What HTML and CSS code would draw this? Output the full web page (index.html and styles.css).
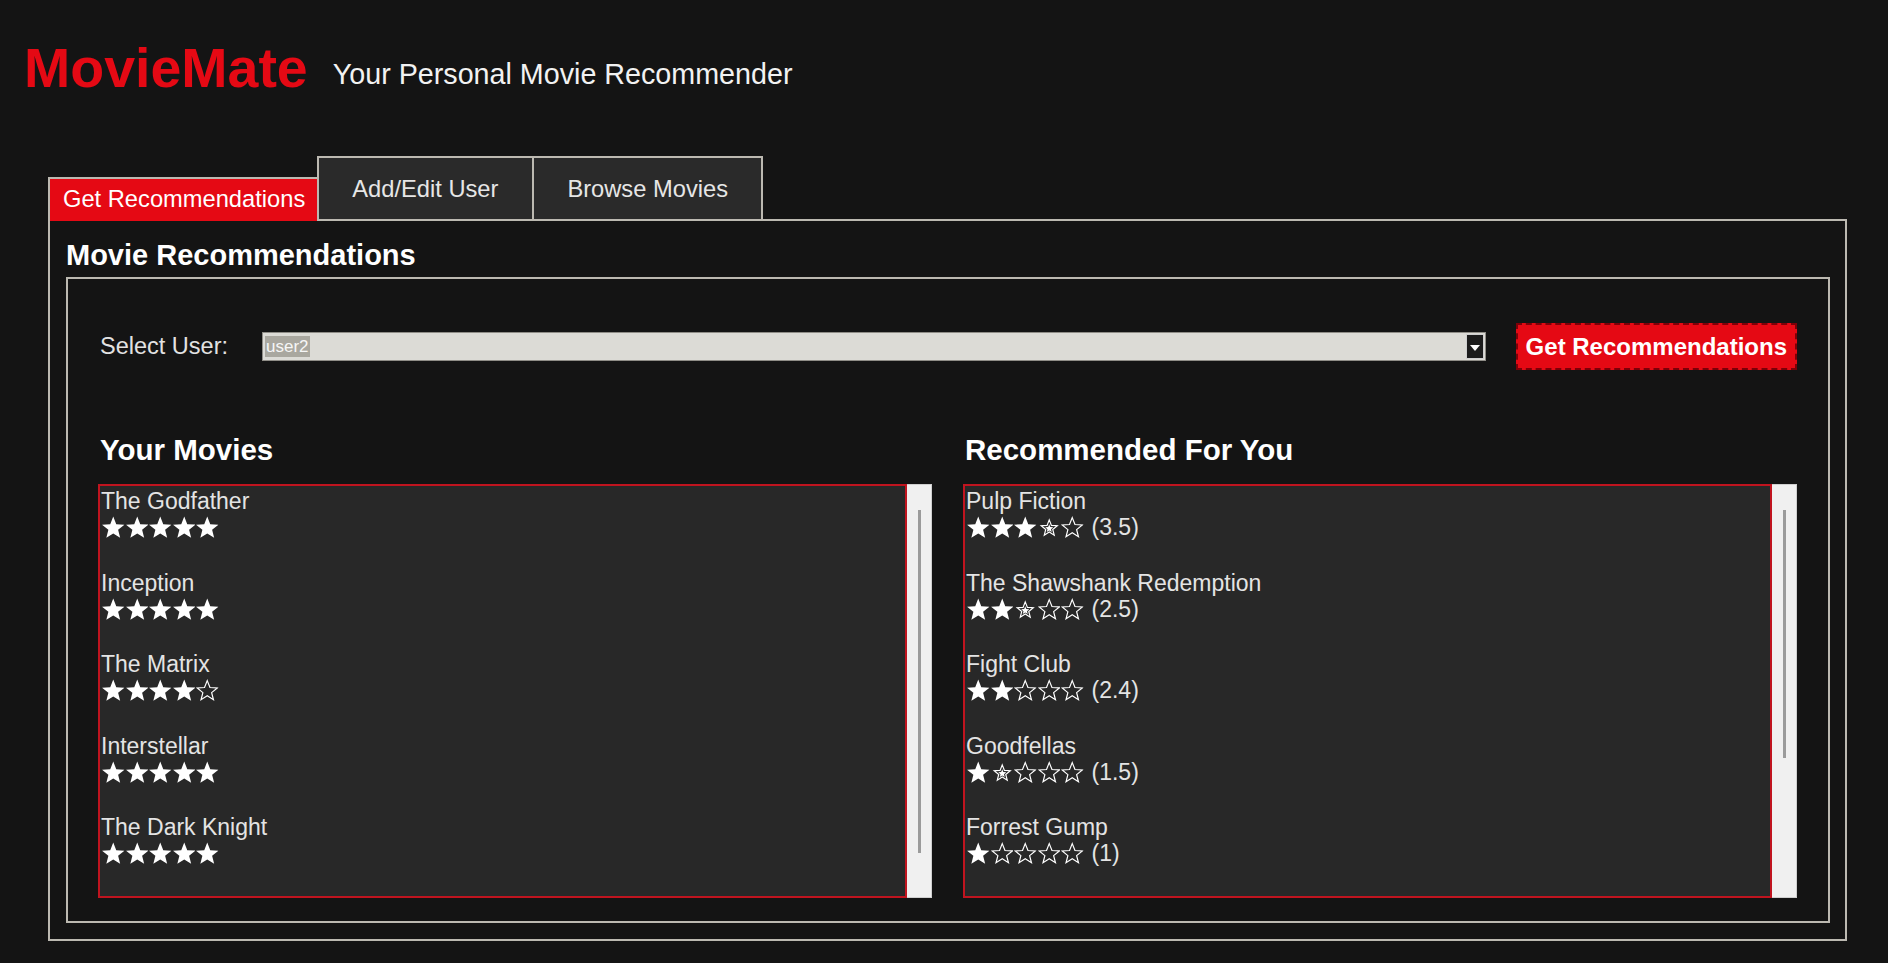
FILE: index.html
```html
<!DOCTYPE html>
<html>
<head>
<meta charset="utf-8">
<title>MovieMate</title>
<link rel="stylesheet" href="styles.css">
</head>
<body>
<svg class="defs" width="0" height="0" aria-hidden="true">
  <defs>
    <path id="star-shape" d="M11 0.5 L13.94 7.96 L21.94 8.45 L15.76 13.55 L17.76 21.3 L11 17 L4.24 21.3 L6.24 13.55 L0.06 8.45 L8.06 7.96 Z"/>
    <symbol id="sf" viewBox="0 0 22 22"><use href="#star-shape" fill="#fff"/></symbol>
    <symbol id="se" viewBox="0 0 22 22"><g transform="translate(11 11.2) scale(0.9) translate(-11 -11.2)"><use href="#star-shape" fill="none" stroke="#fff" stroke-width="1.3" stroke-linejoin="miter"/></g></symbol>
    <symbol id="sh" viewBox="0 0 22 22"><g transform="translate(11 11.5) scale(0.72) translate(-11 -11.2)"><use href="#star-shape" fill="none" stroke="#fff" stroke-width="1.6"/></g><g transform="translate(11 12) scale(0.36) translate(-11 -11.2)"><use href="#star-shape" fill="#fff"/></g></symbol>
  </defs>
</svg>
<header class="header">
  <h1 class="brand">MovieMate</h1>
  <span class="tagline">Your Personal Movie Recommender</span>
</header>
<div class="notebook">
  <div class="tabs">
    <div class="tab active">Get Recommendations</div>
    <div class="tab">Add/Edit User</div>
    <div class="tab">Browse Movies</div>
  </div>
  <section class="panel">
    <h2 class="panel-title">Movie Recommendations</h2>
    <div class="inner">
      <div class="select-row">
        <span class="label">Select User:</span>
        <div class="select"><span class="sel-text">user2</span><span class="arrow"></span></div>
        <button class="btn">Get Recommendations</button>
      </div>
      <div class="cols">
        <div class="col">
          <h3 class="col-title">Your Movies</h3>
          <div class="listwrap">
            <div class="list">
              <div class="item"><div class="title">The Godfather</div><div class="rating" title="5 stars"><svg class="star"><use href="#sf"/></svg><svg class="star"><use href="#sf"/></svg><svg class="star"><use href="#sf"/></svg><svg class="star"><use href="#sf"/></svg><svg class="star"><use href="#sf"/></svg></div></div>
              <div class="item"><div class="title">Inception</div><div class="rating" title="5 stars"><svg class="star"><use href="#sf"/></svg><svg class="star"><use href="#sf"/></svg><svg class="star"><use href="#sf"/></svg><svg class="star"><use href="#sf"/></svg><svg class="star"><use href="#sf"/></svg></div></div>
              <div class="item"><div class="title">The Matrix</div><div class="rating" title="4 stars"><svg class="star"><use href="#sf"/></svg><svg class="star"><use href="#sf"/></svg><svg class="star"><use href="#sf"/></svg><svg class="star"><use href="#sf"/></svg><svg class="star"><use href="#se"/></svg></div></div>
              <div class="item"><div class="title">Interstellar</div><div class="rating" title="5 stars"><svg class="star"><use href="#sf"/></svg><svg class="star"><use href="#sf"/></svg><svg class="star"><use href="#sf"/></svg><svg class="star"><use href="#sf"/></svg><svg class="star"><use href="#sf"/></svg></div></div>
              <div class="item"><div class="title">The Dark Knight</div><div class="rating" title="5 stars"><svg class="star"><use href="#sf"/></svg><svg class="star"><use href="#sf"/></svg><svg class="star"><use href="#sf"/></svg><svg class="star"><use href="#sf"/></svg><svg class="star"><use href="#sf"/></svg></div></div>
            </div>
            <div class="scrollbar"><div class="thumb" style="height:343px"></div></div>
          </div>
        </div>
        <div class="col">
          <h3 class="col-title">Recommended For You</h3>
          <div class="listwrap">
            <div class="list">
              <div class="item"><div class="title">Pulp Fiction</div><div class="rating"><svg class="star"><use href="#sf"/></svg><svg class="star"><use href="#sf"/></svg><svg class="star"><use href="#sf"/></svg><svg class="star"><use href="#sh"/></svg><svg class="star"><use href="#se"/></svg><span class="score">(3.5)</span></div></div>
              <div class="item"><div class="title">The Shawshank Redemption</div><div class="rating"><svg class="star"><use href="#sf"/></svg><svg class="star"><use href="#sf"/></svg><svg class="star"><use href="#sh"/></svg><svg class="star"><use href="#se"/></svg><svg class="star"><use href="#se"/></svg><span class="score">(2.5)</span></div></div>
              <div class="item"><div class="title">Fight Club</div><div class="rating"><svg class="star"><use href="#sf"/></svg><svg class="star"><use href="#sf"/></svg><svg class="star"><use href="#se"/></svg><svg class="star"><use href="#se"/></svg><svg class="star"><use href="#se"/></svg><span class="score">(2.4)</span></div></div>
              <div class="item"><div class="title">Goodfellas</div><div class="rating"><svg class="star"><use href="#sf"/></svg><svg class="star"><use href="#sh"/></svg><svg class="star"><use href="#se"/></svg><svg class="star"><use href="#se"/></svg><svg class="star"><use href="#se"/></svg><span class="score">(1.5)</span></div></div>
              <div class="item"><div class="title">Forrest Gump</div><div class="rating"><svg class="star"><use href="#sf"/></svg><svg class="star"><use href="#se"/></svg><svg class="star"><use href="#se"/></svg><svg class="star"><use href="#se"/></svg><svg class="star"><use href="#se"/></svg><span class="score">(1)</span></div></div>
            </div>
            <div class="scrollbar"><div class="thumb" style="height:248px"></div></div>
          </div>
        </div>
      </div>
    </div>
  </section>
</div>
</body>
</html>
```
FILE: styles.css
```css
* { box-sizing: border-box; }
html, body { margin: 0; padding: 0; }
body {
  background: #141414;
  color: #e4e4e4;
  font-family: "Liberation Sans", Arial, sans-serif;
  width: 1888px;
  height: 963px;
  overflow: hidden;
}
.defs {
  position: absolute;
  width: 0;
  height: 0;
  overflow: hidden;
}
.header {
  display: flex;
  align-items: flex-start;
  padding: 40px 0 0 24px;
}
.brand {
  margin: 0;
  font-size: 55.5px;
  line-height: 56px;
  font-weight: bold;
  color: #e50914;
}
.tagline {
  margin: 17px 0 0 25px;
  font-size: 28.7px;
  line-height: 34px;
  color: #f2f2f2;
}
.notebook {
  margin: 60px 41px 0 48px;
}
.tabs {
  display: flex;
  align-items: flex-end;
}
.tab {
  font-size: 23.7px;
  line-height: 27px;
  color: #e6e6e6;
  background: #2a2a2a;
  border: 2px solid #bcb9b1;
  border-bottom: none;
  padding: 18px 34px 16px 33px;
  white-space: nowrap;
}
.tab + .tab + .tab { border-left: none; padding: 18px 33px 16px 33px; }
.tab.active {
  position: relative;
  z-index: 1;
  margin-bottom: -2px;
  background: #e50914;
  color: #fff;
  border-right: none;
  padding: 7px 12px 8px 13px;
}
.panel {
  border: 2px solid #bcb9b1;
  padding: 0 15px 16px 16px;
}
.panel-title {
  margin: 18px 0 6px 0;
  font-size: 29px;
  line-height: 32px;
  font-weight: bold;
  color: #fff;
}
.inner {
  border: 2px solid #bcb9b1;
  padding: 44px 31px 23px 30px;
}
.select-row {
  display: flex;
  align-items: center;
  height: 47px;
  padding: 0 0 0 2px;
}
.label {
  width: 162px;
  flex: none;
  font-size: 23.5px;
  color: #e2e2e2;
}
.select {
  flex: 1;
  height: 29px;
  background: #dcdbd6;
  border: 1px solid #8f8d87;
  display: flex;
  align-items: center;
  padding: 0 1px 0 2px;
}
.sel-text {
  background: #a9a79f;
  color: #f6f6f6;
  font-size: 17px;
  line-height: 21px;
  padding: 0 1px;
}
.arrow {
  margin-left: auto;
  width: 18px;
  height: 25px;
  background: #1c1c1c;
  border: 1px solid #cfcfcf;
  display: flex;
  align-items: center;
  justify-content: center;
}
.arrow::after {
  content: "";
  border-left: 5px solid transparent;
  border-right: 5px solid transparent;
  border-top: 6px solid #fff;
  margin-top: 3px;
}
.btn {
  margin-left: 30px;
  height: 47px;
  padding: 0 8px;
  background: #e50914;
  color: #fff;
  font-family: "Liberation Sans", Arial, sans-serif;
  font-size: 24px;
  font-weight: bold;
  border: 2px dashed #7d0008;
  white-space: nowrap;
}
.cols {
  display: grid;
  grid-template-columns: 1fr 1fr;
  column-gap: 31px;
  margin-top: 64px;
}
.col-title {
  margin: 0 0 18px 2px;
  font-size: 29.5px;
  line-height: 32px;
  font-weight: bold;
  color: #fff;
}
.listwrap {
  display: flex;
  height: 414px;
}
.list {
  flex: 1;
  background: #282828;
  border: 2px solid #c0141f;
  padding: 2px 1px 2px 1px;
  overflow: hidden;
}
.scrollbar {
  width: 25px;
  flex: none;
  background: #f0f0f0;
  border: 1px solid #cfcfcf;
  border-left: none;
  display: flex;
  justify-content: center;
  align-items: flex-start;
  padding-top: 25px;
}
.thumb {
  width: 3px;
  background: #9b9b9b;
}
.item {
  padding-bottom: 27.5px;
}
.title {
  font-size: 23px;
  line-height: 27px;
  height: 27px;
  color: #e4e4e4;
  white-space: nowrap;
}
.rating {
  display: flex;
  align-items: flex-start;
  height: 27px;
  padding-left: 1px;
  white-space: nowrap;
}
.star {
  width: 22.5px;
  height: 22.5px;
  margin: 1px 1px 0 0;
  flex: none;
}
.score {
  margin-left: 7px;
  font-size: 23px;
  line-height: 25px;
  color: #e4e4e4;
}
```
